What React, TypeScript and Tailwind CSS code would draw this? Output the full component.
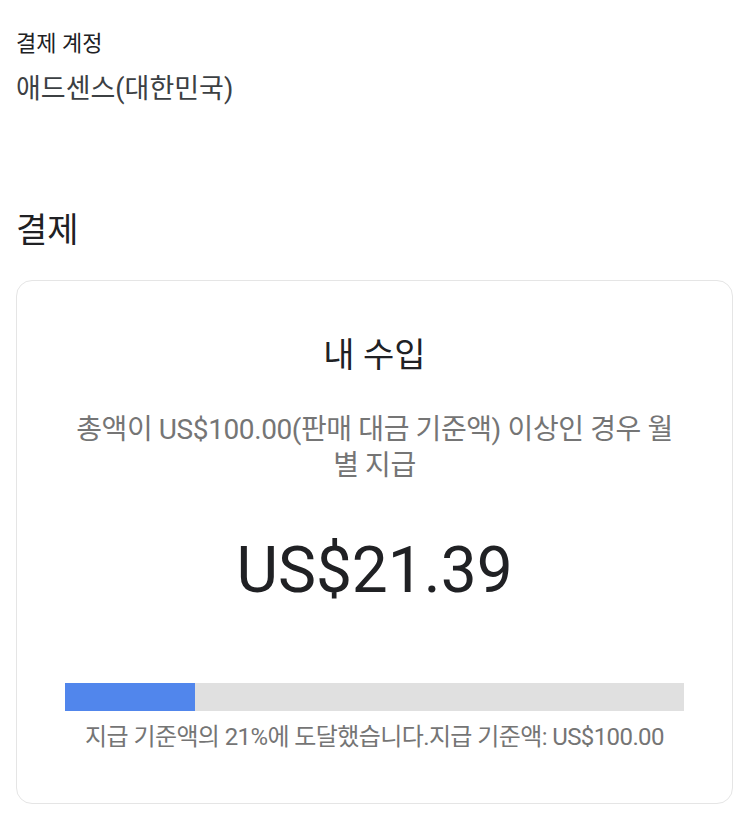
export default function App() {
  const pct = 21;
  return (
    <div
      className="w-[749px] min-h-[816px] bg-white px-4 pt-[30px] text-[#202124]"
      style={{ fontFamily: 'Roboto, "Noto Sans CJK KR", sans-serif' }}
    >
      <div className="text-[22px] leading-[28px] text-[#202124]">결제 계정</div>
      <div className="mt-[13px] text-[27px] leading-[36px] text-[#3c4043]">애드센스(대한민국)</div>
      <h2 className="mt-[101px] text-[34px] leading-[44px] text-[#202124]">결제</h2>
      <div className="mt-[28px] w-[717px] rounded-[16px] border-[1.5px] border-[#e5e5e5] px-12 pt-[52px] pb-[50px] text-center">
        <div className="text-[34px] leading-[44px] text-[#202124]">내 수입</div>
        <div className="mt-[35px] px-[6px] break-all text-[28px] leading-[36px] tracking-[-0.4px] text-[#757575]">
          총액이 US$100.00(판매 대금 기준액) 이상인 경우 월별 지급
        </div>
        <div className="mt-[49px] text-[64px] leading-[76px] text-[#202124]">US$21.39</div>
        <div className="mt-[74px] h-[28px] w-full bg-[#e0e0e0]">
          <div className="h-full bg-[#5186ec]" style={{ width: `${pct}%` }} />
        </div>
        <div className="mt-[10px] whitespace-nowrap text-[24px] leading-[32px] tracking-[-0.6px] text-[#757575]">
          지급 기준액의 21%에 도달했습니다.지급 기준액: US$100.00
        </div>
      </div>
    </div>
  );
}
